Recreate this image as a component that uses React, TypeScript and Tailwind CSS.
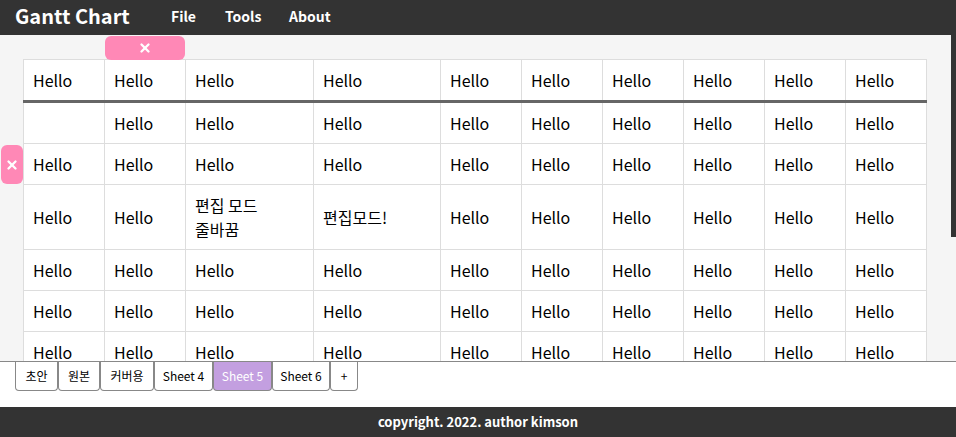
import { X } from "lucide-react";

const widths = [81, 81, 128, 127, 81, 81, 81, 81, 81, 81];

const rows: string[][] = [
  ["", "Hello", "Hello", "Hello", "Hello", "Hello", "Hello", "Hello", "Hello", "Hello"],
  Array(10).fill("Hello"),
  ["Hello", "Hello", "편집 모드\n줄바꿈", "편집모드!", "Hello", "Hello", "Hello", "Hello", "Hello", "Hello"],
  Array(10).fill("Hello"),
  Array(10).fill("Hello"),
  Array(10).fill("Hello"),
];

const tabs = [
  { label: "초안", w: "w-[43px]" },
  { label: "원본", w: "w-[42px]" },
  { label: "커버용", w: "w-[54px]" },
  { label: "Sheet 4", w: "w-[59px]" },
  { label: "Sheet 5", w: "w-[59px]" },
  { label: "Sheet 6", w: "w-[58px]" },
  { label: "+", w: "w-[28px]" },
];

export default function App() {
  return (
    <div
      className="flex h-[437px] w-[956px] flex-col overflow-hidden bg-white text-black"
      style={{ fontFamily: '"Noto Sans CJK KR", "Noto Sans", sans-serif' }}
    >
      {/* top bar */}
      <header className="flex h-[35px] shrink-0 items-center bg-[#333] pb-[3px] pl-[15px] text-white">
        <h1 className="w-[156px] text-[20px] leading-none font-bold">Gantt Chart</h1>
        <nav className="flex items-center text-[14px] leading-none font-bold">
          <span className="w-[54px]">File</span>
          <span className="w-[64px]">Tools</span>
          <span>About</span>
        </nav>
      </header>

      {/* sheet area */}
      <div className="flex h-[326px] shrink-0">
        <div className="relative h-full w-[951px] overflow-hidden bg-[#f5f5f5] pt-[24px] pl-[23px]">
          <button className="absolute top-[1px] left-[105px] flex h-[24px] w-[80px] items-center justify-center rounded-[6px] bg-[#ff88b6] text-white">
            <X size={14} strokeWidth={4} />
          </button>
          <button className="absolute top-[110px] left-[1px] flex h-[39px] w-[22px] items-center justify-center rounded-[6px] bg-[#ff88b6] text-white">
            <X size={14} strokeWidth={4} />
          </button>

          <table className="border-collapse bg-white text-[16px] leading-[24px]">
            <colgroup>
              {widths.map((w, i) => (
                <col key={i} style={{ width: w }} />
              ))}
            </colgroup>
            <thead>
              <tr>
                {widths.map((_, i) => (
                  <th
                    key={i}
                    className="border border-[#ddd] border-b-[3px] border-b-[#666] px-[9px] py-[8px] text-left font-normal"
                  >
                    Hello
                  </th>
                ))}
              </tr>
            </thead>
            <tbody>
              {rows.map((r, ri) => (
                <tr key={ri}>
                  {r.map((c, ci) => (
                    <td
                      key={ci}
                      className="border border-[#ddd] px-[9px] py-[8px] align-middle whitespace-pre-line"
                    >
                      {c}
                    </td>
                  ))}
                </tr>
              ))}
            </tbody>
          </table>
        </div>
        {/* scrollbar */}
        <div className="flex h-full w-[5px] flex-col bg-[#f5f5f5]">
          <div className="h-[202px] bg-[#333]" />
        </div>
      </div>

      {/* sheet tabs */}
      <div className="flex h-[46px] shrink-0 border-t border-[#888] pl-[15px]">
        {tabs.map((t) => (
          <div
            key={t.label}
            className={
              t.label === "Sheet 5"
                ? `flex h-[29px] ${t.w} items-center justify-center rounded-b-[4px] border border-t-0 border-[#888] bg-[#c39fe0] text-[12px] text-white`
                : `flex h-[29px] ${t.w} items-center justify-center rounded-b-[4px] border border-t-0 border-[#888] bg-white text-[12px]`
            }
          >
            {t.label}
          </div>
        ))}
      </div>

      {/* footer */}
      <footer className="flex h-[30px] shrink-0 items-center justify-center bg-[#333] text-[13px] font-bold text-white">
        copyright. 2022. author kimson
      </footer>
    </div>
  );
}
